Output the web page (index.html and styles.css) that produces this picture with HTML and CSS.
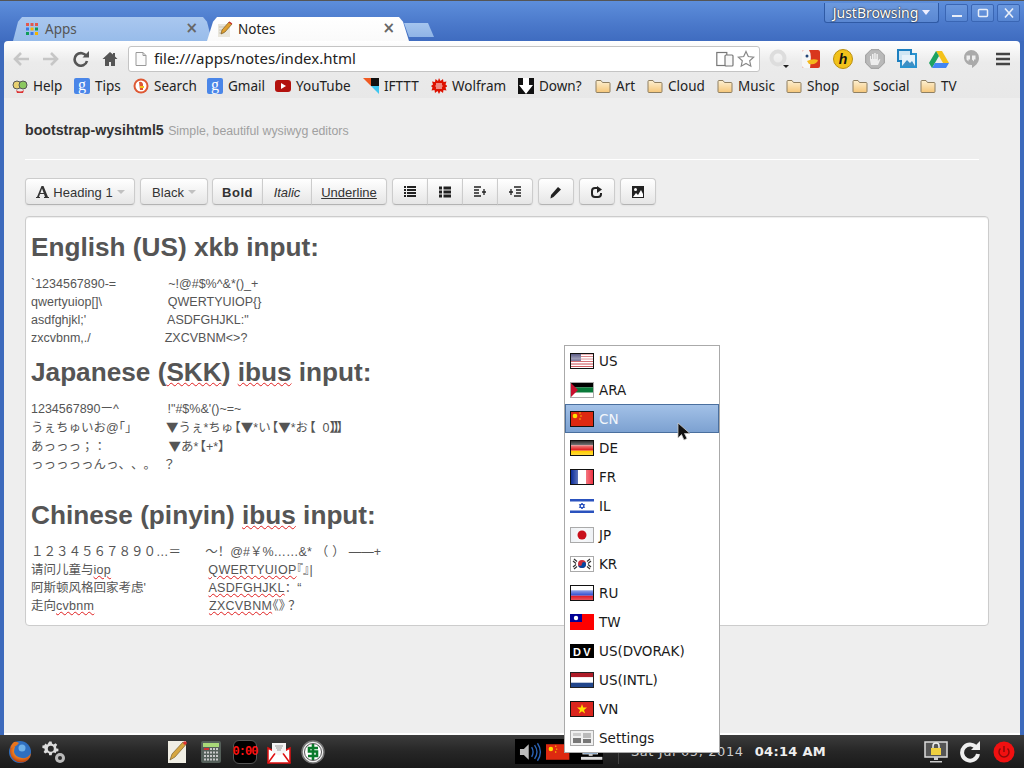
FILE: index.html
```html
<!DOCTYPE html>
<html lang="en">
<head>
<meta charset="utf-8">
<title>Notes</title>
<link rel="stylesheet" href="styles.css">
</head>
<body>
<svg class="defs" aria-hidden="true"><defs>
<linearGradient id="gloss" x1="0" x2="1" y1="0" y2="0"><stop offset="0" stop-color="#fff" stop-opacity="0"/><stop offset=".5" stop-color="#fff" stop-opacity=".55"/><stop offset="1" stop-color="#fff" stop-opacity="0"/></linearGradient>
<linearGradient id="glossv" x1="0" x2="0" y1="0" y2="1"><stop offset="0" stop-color="#fff" stop-opacity=".1"/><stop offset=".35" stop-color="#fff" stop-opacity=".5"/><stop offset=".7" stop-color="#fff" stop-opacity="0"/><stop offset="1" stop-color="#fff" stop-opacity=".3"/></linearGradient>
<linearGradient id="folder" x1="0" x2="0" y1="0" y2="1"><stop offset="0" stop-color="#fdf0d2"/><stop offset="1" stop-color="#f5c679"/></linearGradient>
<radialGradient id="fox" cx=".55" cy=".35" r=".7"><stop offset="0" stop-color="#ffcc33"/><stop offset=".6" stop-color="#e8741c"/><stop offset="1" stop-color="#a3300f"/></radialGradient>
<symbol id="fold" viewBox="0 0 16 16"><path d="M1 3.500q0-1 1-1h4l1.500 2H14q1 0 1 1v8q0 1-1 1H2q-1 0-1-1z" fill="url(#folder)" stroke="#8e7f62"/></symbol>
<symbol id="gb" viewBox="0 0 16 16"><rect width="16" height="16" rx="2" fill="#4a86e8"/><text x="8" y="12" font-size="16" font-family="Liberation Serif" fill="#fff" text-anchor="middle">g</text></symbol>
</defs></svg>

<div class="window">
  <header class="tabstrip">
    <div class="tabs">
      <div class="tab tab-bg">
        <svg class="ico16" viewBox="0 0 16 16"><g><rect x="2" y="2" width="3" height="3" fill="#e2574c"/><rect x="6.500" y="2" width="3" height="3" fill="#e2574c"/><rect x="11" y="2" width="3" height="3" fill="#e2574c"/><rect x="2" y="6.500" width="3" height="3" fill="#3b78e7"/><rect x="6.500" y="6.500" width="3" height="3" fill="#f4b400"/><rect x="11" y="6.500" width="3" height="3" fill="#0f9d58"/><rect x="2" y="11" width="3" height="3" fill="#0f9d58"/><rect x="6.500" y="11" width="3" height="3" fill="#3b78e7"/><rect x="11" y="11" width="3" height="3" fill="#f4b400"/></g></svg>
        <span class="tab-title">Apps</span>
        <span class="tab-x">×</span>
      </div>
      <div class="tab tab-on">
        <svg class="ico16" viewBox="0 0 16 16"><rect x="1" y="3" width="12" height="13" fill="#e9e6dc"/><path d="M2 6h8M2 9h6M2 12h5" stroke="#c9c5b8"/><path d="M4 13l1-4 7-8 3 2-7 8z" fill="#e0a030" stroke="#7a5a20" stroke-width=".7"/><path d="M11.500 1.500l3 2 .8-1-2.800-2z" fill="#c33"/></svg>
        <span class="tab-title">Notes</span>
        <span class="tab-x">×</span>
      </div>
      <div class="newtab"></div>
    </div>
    <div class="frame-right">
      <div class="profile">JustBrowsing<i class="caret-w"></i></div>
      <div class="winbtns">
        <div class="winbtn"><svg viewBox="0 0 12 10" width="12" height="10"><rect x="1" y="7" width="10" height="2" fill="#e8eef8"/></svg></div>
        <div class="winbtn"><svg viewBox="0 0 12 10" width="12" height="10"><rect x="1.500" y="1.500" width="9" height="7" rx="1" fill="none" stroke="#e8eef8" stroke-width="1.500"/></svg></div>
        <div class="winbtn"><svg viewBox="0 0 12 10" width="12" height="10"><path d="M2 .5l8 9M10 .5l-8 9" stroke="#e8eef8" stroke-width="1.600"/></svg></div>
      </div>
    </div>
  </header>

  <div class="chrome">
    <div class="toolbar">
      <div class="navs">
        <svg class="nav" viewBox="0 0 18 16"><path d="M8 2L2 8l6 6M2.500 8H16" fill="none" stroke="#c6c6c6" stroke-width="2.600"/></svg>
        <svg class="nav" viewBox="0 0 18 16"><path d="M10 2l6 6-6 6M15.500 8H2" fill="none" stroke="#c6c6c6" stroke-width="2.600"/></svg>
        <svg class="nav nav-c" viewBox="0 0 18 16"><path d="M14.500 5.500A6.300 6.300 0 1 0 15 10" fill="none" stroke="#555" stroke-width="2.600"/><path d="M10.500 6.500H17V0z" fill="#555"/></svg>
        <svg class="nav nav-d" viewBox="0 0 18 16"><path d="M9 1L1.500 8H4v7h4v-4h2v4h4V8h2.500L14 5.500V2h-2v1.500z" fill="#555"/></svg>
      </div>
      <div class="omnibox">
        <svg class="ico16" viewBox="0 0 16 16"><path d="M3 1.500h7l3 3v10H3z" fill="#fbfbfb" stroke="#999"/><path d="M10 1.500v3h3" fill="none" stroke="#999"/></svg>
        <span class="url">file:///apps/notes/index.html</span>
        <svg class="omni-a" viewBox="0 0 18 16"><rect x=".8" y="1.500" width="10" height="13" fill="none" stroke="#777" stroke-width="1.200"/><rect x="9" y="4" width="8" height="11" rx="1" fill="#f8f8f8" stroke="#777" stroke-width="1.200"/></svg>
        <svg class="omni-b" viewBox="0 0 18 18"><path d="M9 1.500l2.300 5 5.400.6-4 3.700 1.100 5.400L9 13.500l-4.800 2.700 1.100-5.400-4-3.700 5.400-.6z" fill="#fff" stroke="#888" stroke-width="1.200"/></svg>
      </div>
      <div class="exts">
        <svg class="ext" viewBox="0 0 20 20"><circle cx="9" cy="9" r="6.500" fill="none" stroke="#ddd" stroke-width="4"/><path d="M14 16h6l-3 3z" fill="#222"/></svg>
        <svg class="ext" viewBox="0 0 20 20"><rect x="1" y="1" width="18" height="18" rx="2" fill="#d9361d"/><path d="M1 3q0-2 2-2h5q3 4 1 18H3q-2 0-2-2z" fill="#f6f6f6"/><circle cx="6" cy="7" r="1.500" fill="#247"/><path d="M6 12q6-3 11-1-1 5-9 4z" fill="#f4b81c"/></svg>
        <svg class="ext" viewBox="0 0 20 20"><circle cx="10" cy="10" r="9.500" fill="#f2c21b" stroke="#b98f10"/><text x="10" y="15" font-size="14" font-weight="700" font-style="italic" font-family="Liberation Sans" text-anchor="middle" fill="#111">h</text></svg>
        <svg class="ext" viewBox="0 0 20 20"><path d="M6 .7h8L19.300 6v8L14 19.300H6L.7 14V6z" fill="#b9b9b9" stroke="#999"/><path d="M6 16l-1-5V7h1v3h1V5h1.500v5h.7V4h1.500v6h.7V5h1.500v7l1.500-2 1 .5L13 16z" fill="#eee"/></svg>
        <svg class="ext" viewBox="0 0 20 20"><rect x="3" y="4" width="17" height="15" fill="#2a93cf"/><rect x="0" y="0" width="15" height="13" fill="#1c7fc0"/><rect x="2" y="2" width="11" height="9" fill="#cfe6f4"/><rect x="5" y="6" width="13" height="11" fill="#e6f2fa"/><path d="M5 17l5-6 3 3 2-2 3 5z" fill="#3d8fc4"/></svg>
        <svg class="ext" viewBox="0 0 20 20"><path d="M7 2h6l7 12h-6z" fill="#f4c21b"/><path d="M7 2L0 14l3 5 7-12z" fill="#1da261"/><path d="M3 19h14l3-5H6z" fill="#4285f4"/></svg>
        <svg class="ext" viewBox="0 0 20 20"><path d="M10 1a8 8 0 0 1 8 8c0 5-4 8-7 10v-3a7.500 7.500 0 0 1-1-15z" fill="#aaa"/><path d="M5.500 6.500h3.500v4H7.500v2l-2-2zM11 6.500h3.500v4H13v2l-2-2z" fill="#eee"/></svg>
        <svg class="menu-ico" viewBox="0 0 14 14"><path d="M0 2h14M0 7h14M0 12h14" stroke="#444" stroke-width="2.600"/></svg>
      </div>
    </div>

    <nav class="bookmarks">
      <a class="bm bm-help"><svg class="ico16" viewBox="0 0 16 16"><circle cx="5" cy="7" r="4" fill="#e8d070" stroke="#555"/><circle cx="11" cy="7" r="4" fill="#8cc860" stroke="#555"/><path d="M4 12q4 3 8 0l-1 3H5z" fill="#d33"/></svg>Help</a>
      <a class="bm bm-tips"><svg class="ico16"><use href="#gb"/></svg>Tips</a>
      <a class="bm bm-search"><svg class="ico16" viewBox="0 0 16 16"><circle cx="8" cy="8" r="7.500" fill="#de5833"/><circle cx="8" cy="8" r="5.500" fill="#fff"/><path d="M6 4q3-1 4 2v6H7z" fill="#de5833"/><path d="M7 8h4v2H7z" fill="#f4c21b"/></svg>Search</a>
      <a class="bm bm-gmail"><svg class="ico16"><use href="#gb"/></svg>Gmail</a>
      <a class="bm bm-yt"><svg class="ico16" viewBox="0 0 16 16"><rect y="2" width="16" height="12" rx="3" fill="#b3120e"/><path d="M6 5l5 3-5 3z" fill="#fff"/></svg>YouTube</a>
      <a class="bm bm-if"><svg class="ico16" viewBox="0 0 16 16"><path d="M0 0h8v8z" fill="#f05a22"/><rect x="8" width="8" height="8" fill="#111"/><path d="M8 8h8v8z" fill="#3ec6f0"/></svg>IFTTT</a>
      <a class="bm bm-wolf"><svg class="ico16" viewBox="0 0 16 16"><path d="M8 0l1.500 3 2.500-2 .5 3 3-.5-1 3 2 1.500-2 1.500 1 3-3-.5-.5 3-2.500-2L8 16l-1.500-3-2.500 2-.5-3-3 .5 1-3L0 8l2-1.500-1-3 3 .5.5-3 2.500 2z" fill="#dd1100"/><path d="M5 6h6M4.500 8h7M5 10h6" stroke="#fff"/></svg>Wolfram</a>
      <a class="bm bm-down"><svg class="ico16" viewBox="0 0 16 16"><rect width="16" height="16" fill="#111"/><path d="M5 0h6v7h4l-7 9-7-9h4z" fill="#fff"/><path d="M0 16h5L0 10zM16 16h-5l5-6z" fill="#111"/></svg>Down?</a>
      <a class="bm bm-art"><svg class="ico16"><use href="#fold"/></svg>Art</a>
      <a class="bm bm-cloud"><svg class="ico16"><use href="#fold"/></svg>Cloud</a>
      <a class="bm bm-music"><svg class="ico16"><use href="#fold"/></svg>Music</a>
      <a class="bm bm-shop"><svg class="ico16"><use href="#fold"/></svg>Shop</a>
      <a class="bm bm-social"><svg class="ico16"><use href="#fold"/></svg>Social</a>
      <a class="bm"><svg class="ico16"><use href="#fold"/></svg>TV</a>
    </nav>
  </div>

  <main class="page">
    <div class="hero"><strong>bootstrap-wysihtml5</strong> <small>Simple, beautiful wysiwyg editors</small></div>
    <hr class="rule">
    <div class="wtoolbar">
      <button class="btn btn-heading"><svg class="btn-a" viewBox="0 0 14 14"><path d="M1 13h4v-1H4l1-3h4l1 3H9v1h5v-1h-1L8.500 1h-2L2 12H1zM5.400 8L7 3.500 8.700 8z" fill="#333"/></svg>Heading 1<i class="caret"></i></button>
      <button class="btn btn-color">Black<i class="caret"></i></button>
      <div class="group">
        <button class="btn b-bold">Bold</button>
        <button class="btn b-ital">Italic</button>
        <button class="btn b-und">Underline</button>
      </div>
      <div class="group">
        <button class="btn b-ico"><svg class="gly" viewBox="0 0 14 14"><path d="M1 2h12M1 5h12M1 8h12M1 11h12" stroke="#222" stroke-width="1.800" stroke-dasharray="2 1 9"/></svg></button>
        <button class="btn b-ico"><svg class="gly" viewBox="0 0 14 14"><path d="M1 3h3M1 7h3M1 11h3" stroke="#222" stroke-width="3"/><path d="M5.500 3H13M5.500 7H13M5.500 11H13" stroke="#222" stroke-width="3"/></svg></button>
        <button class="btn b-ico"><svg class="gly" viewBox="0 0 14 14"><path d="M1 2h7M1 5h5M1 8h5M1 11h7M11 4v6M9 7h4" stroke="#222" stroke-width="1.300"/></svg></button>
        <button class="btn b-ico"><svg class="gly" viewBox="0 0 14 14"><path d="M6 2h7M8 5h5M8 8h5M6 11h7M3 4v6M1 7h4" stroke="#222" stroke-width="1.300"/></svg></button>
      </div>
      <button class="btn b-one"><svg class="gly" viewBox="0 0 14 14"><path d="M2 10l7-8 3 2.500-7.500 7.500-3 1.500z" fill="#222"/></svg></button>
      <button class="btn b-one"><svg class="gly" viewBox="0 0 14 14"><path d="M7 3H5a3 3 0 0 0-3 3v3a3 3 0 0 0 3 3h3a3 3 0 0 0 3-3V8" fill="none" stroke="#222" stroke-width="2"/><path d="M7 1l5 3.500L7 8z" fill="#222"/></svg></button>
      <button class="btn b-one"><svg class="gly" viewBox="0 0 14 14"><rect x="1" y="1" width="12" height="12" fill="#222"/><circle cx="4.500" cy="4.500" r="1.500" fill="#fff"/><path d="M2 12l3-4 2 2 3-5 2 4v3z" fill="#fff"/></svg></button>
    </div>

    <article class="editor">
      <h1 class="ed-h first">English (US) xkb input:</h1>
      <div class="ed-block"><div>`1234567890-=               ~!@#$%^&amp;*()_+</div><div>qwertyuiop[]\                   QWERTYUIOP{}</div><div>asdfghjkl;'                       &#8202;ASDFGHJKL:"</div><div>zxcvbnm,./                     &#8202;ZXCVBNM&lt;&gt;?</div></div>
      <h1 class="ed-h">Japanese (<span class="sp">SKK</span>) <span class="sp">ibus</span> input:</h1>
      <div class="ed-block ja"><div>1234567890ー^              !"#$%&amp;'()~=~</div><div>うぇちゅいお@｢｣          <span class="tri">▼</span>うぇ*ちゅ<span class="bo">【</span><span class="tri">▼</span>*い<span class="bo">【</span><span class="tri">▼</span>*お<span class="bo">【</span>  0<span class="bc">】】】</span></div><div>あっっっ；：                  <span class="tri">▼</span>あ*<span class="bo">【</span>+*<span class="bc1">】</span></div><div>っっっっっんっ、、。  ？</div></div>
      <h1 class="ed-h cn">Chinese (pinyin) <span class="sp">ibus</span> input:</h1>
      <div class="ed-block zh"><div>１２３４５６７８９０…＝       ～！@#￥%……&amp;*<span class="par">（）</span>——+</div><div>请问儿童与<span class="sp">iop</span>                            <span class="sp">QWERTYUIOP</span><span class="bo2">『</span><span class="bc2">』</span>|</div><div>阿斯顿风格回家考虑'                  <span class="sp">ASDFGHJKL</span>：“</div><div>走向<span class="sp">cvbnm</span>                                 <span class="sp">ZXCVBNM</span><span class="bo2">《</span><span class="bc3">》</span>？</div></div>
    </article>
  </main>

  <footer class="taskbar">
    <div class="tb-left">
      <svg class="tk" viewBox="0 0 24 24"><circle cx="12" cy="12" r="11" fill="#2f6fc0"/><circle cx="14" cy="8" r="3.500" fill="#6fb0e8"/><path d="M3 5q-3 9 3 15 7 5 14 0 3-3 3-7-3 6-9 5-7-1-8-6 0-3 1-5z" fill="url(#fox)"/><path d="M6 2q-3 2-3 6 5-1 8-5-3-2-5-1z" fill="#e8741c"/></svg>
      <svg class="tk" viewBox="0 0 24 24"><path d="M9 2h3l.5 2.500 2 1L17 4l2 2-1.500 2.500.5 2 2.500.5v3l-2.500.5-1 2-2-1-2 .5L12 19H9l-.5-2.500-2-1L4 17l-2-2 1.500-2.500-.5-2L.5 10V7L3 6.500l1-2L6.500 6z" fill="#ddd" transform="scale(.8)"/><circle cx="8.800" cy="8.800" r="3" fill="#2b2b2b"/><circle cx="18" cy="18" r="5" fill="#bbb"/><circle cx="18" cy="18" r="2" fill="#2b2b2b"/></svg>
      <div class="tk-gap"></div>
      <svg class="tk" viewBox="0 0 24 24"><rect x="3" y="1" width="18" height="22" fill="#f0eee4"/><path d="M5 20l2-6L18 2l3 2.500L10 17z" fill="#d6a640" stroke="#6a5020" stroke-width=".6"/><circle cx="20" cy="3" r="1.800" fill="#d33"/></svg>
      <svg class="tk" viewBox="0 0 24 24"><rect x="2" y="1" width="20" height="22" rx="2" fill="#55605a"/><rect x="4" y="3" width="16" height="4" fill="#a8d878"/><path d="M5 9h14M5 12.500h14M5 16h14M5 19.500h14" stroke="#c8c8c8" stroke-width="2" stroke-dasharray="2 1"/><rect x="5" y="8" width="5" height="2" fill="#c33"/></svg>
      <div class="tk tk-clock">0:00</div>
      <svg class="tk" viewBox="0 0 24 24"><path d="M1 8l11 6 11-6v15H1z" fill="#fff" stroke="#e01010" stroke-width="1.500"/><path d="M1 23l8-11M23 23l-8-11" stroke="#e01010" stroke-width="1.500"/><path d="M5 3h14v9l-7 3.500L5 12z" fill="#f4f4f4"/><path d="M8 6h8M9 8h6M10 10h4" stroke="#999"/></svg>
      <svg class="tk" viewBox="0 0 24 24"><circle cx="12" cy="12" r="11" fill="#eee" stroke="#777" stroke-width="1.500"/><circle cx="12" cy="12" r="8.500" fill="#fff" stroke="#555"/><path d="M17 8H8v3.500h8V16H7M12 4v16" fill="none" stroke="#0a7a2a" stroke-width="2.600"/></svg>
    </div>
    <div class="tb-right">
      <div class="tray">
        <svg class="tray-sp" viewBox="0 0 24 20"><path d="M1 7h4l5-5v16l-5-5H1z" fill="#bbb"/><path d="M13 5q3 5 0 10M16 3q5 7 0 14M19 1q6 9 0 18" fill="none" stroke="#2b64b8" stroke-width="1.400"/></svg>
        <svg class="tray-fl" viewBox="0 0 24 16"><rect width="24" height="16" fill="#de2910"/><circle cx="5" cy="5" r="2.300" fill="#ffde00"/><circle cx="10" cy="2" r=".7" fill="#ffde00"/><circle cx="11" cy="5" r=".7" fill="#ffde00"/><circle cx="10" cy="8" r=".7" fill="#ffde00"/></svg>
        <svg class="tray-mon" viewBox="0 0 24 20"><rect x="3" y="1" width="15" height="11" fill="#3f82c8" stroke="#ddd"/><path d="M9 12h4v2H9z" fill="#ccc"/><rect x="1" y="15" width="22" height="3" fill="#ddd"/></svg>
      </div>
      <span class="tb-sep"></span>
      <span class="date">Sat Jul 05, 2014</span>
      <span class="time">04:14 AM</span>
      <svg class="tr-a" viewBox="0 0 24 22"><rect x="1" y="1" width="22" height="15" fill="#555" stroke="#ddd" stroke-width="1.500"/><rect x="7" y="7" width="10" height="7" fill="#f0d040"/><path d="M9 7V5a3 3 0 0 1 6 0v2" fill="none" stroke="#eee" stroke-width="1.500"/><path d="M10 16h4v3H10zM6 20h12v1.500H6z" fill="#ccc"/></svg>
      <svg class="tr-b" viewBox="0 0 22 22"><path d="M18 7.500A8 8 0 1 0 19 13" fill="none" stroke="#eee" stroke-width="4"/><path d="M12 9h9V0z" fill="#eee"/></svg>
      <svg class="tr-c" viewBox="0 0 22 22"><circle cx="11" cy="11" r="10.500" fill="#f01010"/><path d="M7.500 7.500a5 5 0 1 0 7 0" fill="none" stroke="#8c0a0a" stroke-width="1.500"/><path d="M11 5v6" stroke="#8c0a0a" stroke-width="1.500"/></svg>
    </div>
  </footer>

  <ul class="kbmenu">
    <li><svg class="flag bd" viewBox="0 0 24 16"><rect width="24" height="16" fill="#fff"/><path d="M0 1h24M0 3.500h24M0 6h24M0 8.500h24M0 11h24M0 13.500h24" stroke="#c8434a" stroke-width="1.200"/><rect width="11" height="8" fill="#3c3b6e"/><rect width="24" height="16" fill="url(#glossv)"/></svg>US</li>
    <li><svg class="flag bg" viewBox="0 0 24 16"><rect width="24" height="5.300" fill="#000"/><rect y="5.300" width="24" height="5.400" fill="#0a7a3a"/><rect y="10.700" width="24" height="5.300" fill="#fff"/><path d="M0 0l8 8-8 8z" fill="#c8102e"/></svg>ARA</li>
    <li class="active"><svg class="flag bd" viewBox="0 0 24 16"><rect width="24" height="16" fill="#de2910"/><circle cx="5" cy="5" r="2.300" fill="#ffde00"/><circle cx="10" cy="2" r=".7" fill="#ffde00"/><circle cx="11" cy="5" r=".7" fill="#ffde00"/><circle cx="10" cy="8" r=".7" fill="#ffde00"/></svg>CN</li>
    <li><svg class="flag bd" viewBox="0 0 24 16"><rect width="24" height="5.300" fill="#000"/><rect y="5.300" width="24" height="5.400" fill="#dd0000"/><rect y="10.700" width="24" height="5.300" fill="#ffce00"/><rect width="24" height="16" fill="url(#glossv)"/></svg>DE</li>
    <li><svg class="flag bd" viewBox="0 0 24 16"><rect width="8" height="16" fill="#002395"/><rect x="8" width="8" height="16" fill="#fff"/><rect x="16" width="8" height="16" fill="#ed2939"/><rect width="24" height="16" fill="url(#gloss)"/></svg>FR</li>
    <li><svg class="flag" viewBox="0 0 24 16"><rect width="24" height="16" fill="#fff"/><rect y="1" width="24" height="2.500" fill="#2a52be"/><rect y="12.500" width="24" height="2.500" fill="#2a52be"/><path d="M12 5l2.600 4.500H9.400zM12 11l2.600-4.500H9.400z" fill="none" stroke="#2a52be"/></svg>IL</li>
    <li><svg class="flag bg" viewBox="0 0 24 16"><rect width="24" height="16" fill="#eef1f5"/><rect width="24" height="16" fill="url(#gloss)"/><circle cx="12" cy="8" r="4.500" fill="#c9101c"/></svg>JP</li>
    <li><svg class="flag bg" viewBox="0 0 24 16"><rect width="24" height="16" fill="#fff"/><circle cx="12" cy="8" r="4" fill="#cd2e3a"/><path d="M8 8a4 4 0 0 0 8 0 2 2 0 0 0-4 0 2 2 0 0 1-4 0z" fill="#0047a0"/><path d="M4 3l3 2.500M3 5l3 2.500M20 3l-3 2.500M21 5l-3 2.500M4 13l3-2.500M3 11l3-2.500M20 13l-3-2.500M21 11l-3-2.500" stroke="#333" stroke-width="1.200"/></svg>KR</li>
    <li><svg class="flag bd" viewBox="0 0 24 16"><rect width="24" height="5.300" fill="#fff"/><rect y="5.300" width="24" height="5.400" fill="#1c3fd0"/><rect y="10.700" width="24" height="5.300" fill="#e0202c"/><rect width="24" height="16" fill="url(#glossv)"/></svg>RU</li>
    <li><svg class="flag" viewBox="0 0 24 16"><rect width="24" height="16" fill="#fe0000"/><rect width="12" height="8" fill="#000095"/><circle cx="6" cy="4" r="2.200" fill="#fff"/></svg>TW</li>
    <li><svg class="flag" viewBox="0 0 24 16"><rect y="1" width="24" height="14" fill="#000"/><text x="7" y="12.500" font-size="11" font-weight="700" font-family="Liberation Sans" fill="#fff" text-anchor="middle">D</text><text x="17" y="12.500" font-size="11" font-weight="700" font-family="Liberation Sans" fill="#fff" text-anchor="middle">V</text></svg>US(DVORAK)</li>
    <li><svg class="flag bn" viewBox="0 0 24 16"><rect width="24" height="5.300" fill="#ae1c28"/><rect y="5.300" width="24" height="5.400" fill="#fff"/><rect y="10.700" width="24" height="5.300" fill="#21468b"/></svg>US(INTL)</li>
    <li><svg class="flag bd" viewBox="0 0 24 16"><rect width="24" height="16" fill="#da251d"/><path d="M12 3l1.200 3.600H17l-3 2.300 1.100 3.600-3.100-2.200-3.100 2.200L10 8.900 7 6.600h3.800z" fill="#ffe000"/></svg>VN</li>
    <li><svg class="flag bg" viewBox="0 0 24 16"><rect width="24" height="16" rx="1" fill="#f0f0f0"/><rect x="3" y="3" width="8" height="3" fill="#ccc"/><rect x="3" y="8" width="8" height="5" fill="#777"/><rect x="13" y="3" width="8" height="5" fill="#bbb"/><rect x="13" y="9" width="8" height="4" fill="#777"/></svg>Settings</li>
  </ul>

  <svg class="pointer" viewBox="0 0 14 20"><path d="M1 1v15l3.500-3.500L7 18l3-1.500-2.500-5H13z" fill="#111" stroke="#ccc" stroke-width=".8"/></svg>
</div>
</body>
</html>
```

FILE: styles.css
```css
* { box-sizing: border-box; }
html, body { margin: 0; padding: 0; height: 100%; overflow: hidden; }
body { font-family: "Noto Sans", "DejaVu Sans", sans-serif; }
.defs { position: absolute; width: 0; height: 0; }
.ico16 { width: 16px; height: 16px; flex: none; }

.window {
  position: relative;
  width: 1024px; height: 768px;
  display: flex; flex-direction: column;
  background: #3d6abc;
}

/* Tab strip */
.tabstrip {
  height: 41px; flex: none;
  display: flex; justify-content: space-between;
  padding: 0 4px 0 13px;
  border-top: 1px solid #555;
  background: linear-gradient(#5d8edb, #4a78ca 60%, #3f6cc0);
}
.tabs { display: flex; align-items: flex-end; }
.tab {
  width: 199px; height: 24px;
  display: flex; align-items: center; gap: 5px;
  padding: 0 14px 1px 11px;
  clip-path: polygon(0 100%, 5px 20%, 9px 0, 190px 0, 194px 20%, 199px 100%);
  font-size: 13.5px;
}
.tab-bg { background: linear-gradient(#a9c7ef, #98bcea); color: #555; margin-right: -5px; }
.tab-on { background: linear-gradient(#fff, #fafafa); color: #222; position: relative; width: 202px; padding-left: 10px; clip-path: polygon(0 100%, 6px 20%, 10px 0, 192px 0, 196px 20%, 202px 100%); }
.tab-title { flex: 1; }
.tab-x { font-size: 15px; font-weight: 700; color: #666; font-family: "DejaVu Sans", sans-serif; line-height: 1; }
.newtab {
  width: 30px; height: 14px; margin: 0 0 4px -5px;
  background: linear-gradient(#a5c5ee, #8fb4e6);
  clip-path: polygon(0 0, 24px 0, 30px 100%, 5px 100%);
}
.frame-right { display: flex; gap: 6px; align-items: flex-start; }
.profile {
  width: 115px; height: 20px; margin-top: 2px;
  display: flex; align-items: center; justify-content: center; gap: 4px;
  border: 1px solid #2f5aa5; border-top: 0; border-radius: 0 0 3px 3px;
  background: linear-gradient(#6c99de, #5a87d2);
  color: #fff; font-size: 14px;
  text-shadow: 0 0 2px #222, 0 0 1px #222;
}
.caret-w { border: 4px solid transparent; border-top: 5px solid #eef; border-bottom: 0; }
.winbtns { display: flex; gap: 3px; margin-top: 3px; }
.winbtn {
  width: 23px; height: 18px;
  display: flex; align-items: center; justify-content: center;
  border: 1px solid #3a66b4; border-radius: 2px;
  background: linear-gradient(#6b98de, #5685d2);
}

/* Browser chrome */
.chrome { margin: 0 4px; flex: none; border-radius: 4px 4px 0 0; background: linear-gradient(#fff, #ebebeb 38%, #e8e8e8); overflow: hidden; }
.toolbar { height: 33px; display: flex; align-items: center; padding-top: 3px; }
.navs { display: flex; gap: 10px; padding-left: 9px; width: 124px; flex: none; }
.nav { width: 18px; height: 16px; flex: none; }
.nav-c { margin-left: 3px; }
.nav-d { margin-left: 1px; }
.omnibox {
  width: 632px; height: 26px; flex: none;
  display: flex; align-items: center;
  padding: 0 4px;
  background: #fff; border: 1px solid #c4c4c4; border-radius: 3px;
}
.url { flex: 1; margin-left: 5px; font-size: 15px; line-height: 20px; padding-bottom: 2px; color: #222; }
.omni-a { width: 18px; height: 16px; margin-right: 3px; }
.omni-b { width: 18px; height: 18px; }
.exts { display: flex; align-items: center; gap: 12px; padding-left: 9px; }
.ext { width: 20px; height: 20px; flex: none; }
.menu-ico { width: 14px; height: 14px; margin-left: 3px; }

.bookmarks { height: 24px; display: flex; align-items: center; padding-left: 8px; }
.bm { display: flex; align-items: center; gap: 5px; font-size: 13.5px; color: #222; white-space: nowrap; flex: none; }
.bm-help { width: 62px; }
.bm-tips { width: 59px; }
.bm-search { width: 74px; }
.bm-gmail { width: 68px; }
.bm-yt { width: 88px; }
.bm-if { width: 68px; }
.bm-wolf { width: 87px; }
.bm-down { width: 77px; }
.bm-art { width: 52px; }
.bm-cloud { width: 70px; }
.bm-music { width: 69px; }
.bm-shop { width: 66px; }
.bm-social { width: 68px; }

/* Page */
.page {
  flex: 1; min-height: 0;
  margin: 0 4px;
  padding: 23px 31px 0 21px;
  background: #eee;
  border-bottom: 2px solid #fff;
  font-family: "Liberation Sans", sans-serif;
}
.hero { font-size: 12.3px; line-height: 18px; color: #a0a0a0; }
.hero strong { font-size: 14.2px; color: #333; }
.hero small { font-size: inherit; margin-left: 1px; }
.rule { margin: 19px 10px 18px 0; border: 0; border-top: 1px solid #fff; }
.wtoolbar { display: flex; gap: 5px; margin-bottom: 11px; height: 27px; }
.group { display: flex; }
.group .btn { border-radius: 0; margin-left: -1px; }
.group .btn:first-child { border-radius: 4px 0 0 4px; margin-left: 0; }
.group .btn:last-child { border-radius: 0 4px 4px 0; }
.btn {
  height: 27px; padding: 1px 0 0;
  display: flex; align-items: center; justify-content: center;
  border: 1px solid #ccc; border-bottom-color: #b3b3b3; border-radius: 4px;
  background: linear-gradient(#fff, #e6e6e6);
  box-shadow: inset 0 1px 0 rgba(255,255,255,.2), 0 1px 2px rgba(0,0,0,.05);
  font: 13px "Liberation Sans", sans-serif; color: #333;
}
.btn-heading { width: 110px; }
.btn-color { width: 68px; margin-right: -1px; }
.btn-a { width: 14px; height: 14px; margin-right: 4px; }
.caret { margin-left: 4px; border: 4px solid transparent; border-top-color: #bbb; border-bottom: 0; opacity: .9; }
.b-bold { width: 51px; font-weight: 700; letter-spacing: .5px; }
.b-ital { width: 50px; font-style: italic; }
.b-und { width: 76px; text-decoration: underline; }
.b-ico { width: 36px; }
.b-one { width: 36px; }
.gly { width: 14px; height: 14px; }

.editor {
  height: 410px;
  padding: 0 5px;
  background: #fff;
  border: 1px solid #ccc; border-radius: 4px;
  box-shadow: inset 0 1px 1px rgba(0,0,0,.075);
  color: #555;
  overflow: hidden;
}
.ed-h { margin: 7px 0 0; font-size: 26.2px; line-height: 36px; font-weight: 700; color: #555; height: 36px; }
.ed-h.first { margin-top: 12px; }
.ed-h.cn { margin-top: 23px; }
.ed-block { margin-top: 10px; font-size: 12.5px; line-height: 18px; white-space: pre; text-spacing-trim: space-all; }
.ja { font-family: "Liberation Sans", "Noto Sans CJK JP", sans-serif; }
.zh { font-family: "Liberation Sans", "Noto Sans CJK SC", sans-serif; }
.tri { font-family: "Noto Sans CJK JP", sans-serif; }
.bo { margin-left: -5px; }
.bc { letter-spacing: -9px; }
.bc1 { letter-spacing: -5px; }
.bo2 { margin-left: -6px; }
.bc2 { letter-spacing: -6px; }
.bc3 { letter-spacing: -3px; }
.par { letter-spacing: 4px; margin-left: 4px; }
.zh .sp { letter-spacing: .3px; }
.sp { text-decoration: underline wavy #e02020; text-decoration-thickness: 1px; text-underline-offset: 1px; }

/* Taskbar */
.taskbar {
  height: 33px; flex: none;
  display: flex; justify-content: space-between; align-items: center;
  padding: 0 9px 0 8px;
  background: linear-gradient(#3c3c3c, #262626 50%, #1a1a1a);
}
.tb-left { display: flex; align-items: center; gap: 10px; }
.tk { width: 24px; height: 24px; flex: none; }
.tk-gap { width: 79px; }
.tk-clock {
  display: flex; align-items: center; justify-content: center;
  background: #000; border-radius: 6px; border: 1px solid #555;
  color: #ff1010; font: 700 12px "Liberation Mono", monospace; letter-spacing: -1px;
}
.tb-right { display: flex; align-items: center; }
.tray { width: 88px; height: 25px; display: flex; align-items: center; gap: 4px; padding-left: 4px; background: #000; }
.tray-sp { width: 24px; height: 20px; }
.tray-fl { width: 24px; height: 16px; }
.tray-mon { width: 24px; height: 20px; margin-left: 6px; }
.tb-sep { width: 1px; height: 24px; background: #444; margin: 0 12px 0 15px; }
.date, .time { font-family: "DejaVu Sans", sans-serif; font-size: 13px; color: #ccc; letter-spacing: .6px; }
.time { font-weight: 700; color: #eee; margin-left: 11px; letter-spacing: .3px; }
.tr-a { width: 24px; height: 22px; margin-left: 98px; }
.tr-b { width: 22px; height: 22px; margin-left: 11px; }
.tr-c { width: 22px; height: 22px; margin-left: 12px; }

/* Keyboard layout menu */
.kbmenu {
  position: absolute; left: 564px; top: 345px;
  width: 156px; margin: 0; padding: 0;
  list-style: none;
  background: #fff;
  border: 1px solid #aaa;
  font: 13.5px "DejaVu Sans", sans-serif;
  color: #1a1a1a;
}
.kbmenu li { height: 29px; display: flex; align-items: center; gap: 5px; padding: 0 5px; }
.kbmenu li.active { background: linear-gradient(#a4c2e8, #7ba0d0); color: #f2f6fb; outline: 1px solid #4a6f9e; outline-offset: -1px; }
.flag { width: 24px; height: 16px; flex: none; }
.flag.bd { outline: 1px solid #111; outline-offset: -1px; }
.flag.bg { outline: 1px solid #aaa; outline-offset: -1px; }
.flag.bn { outline: 1px solid #222; outline-offset: -1px; }
.pointer { position: absolute; left: 677px; top: 422px; width: 14px; height: 20px; }
```
